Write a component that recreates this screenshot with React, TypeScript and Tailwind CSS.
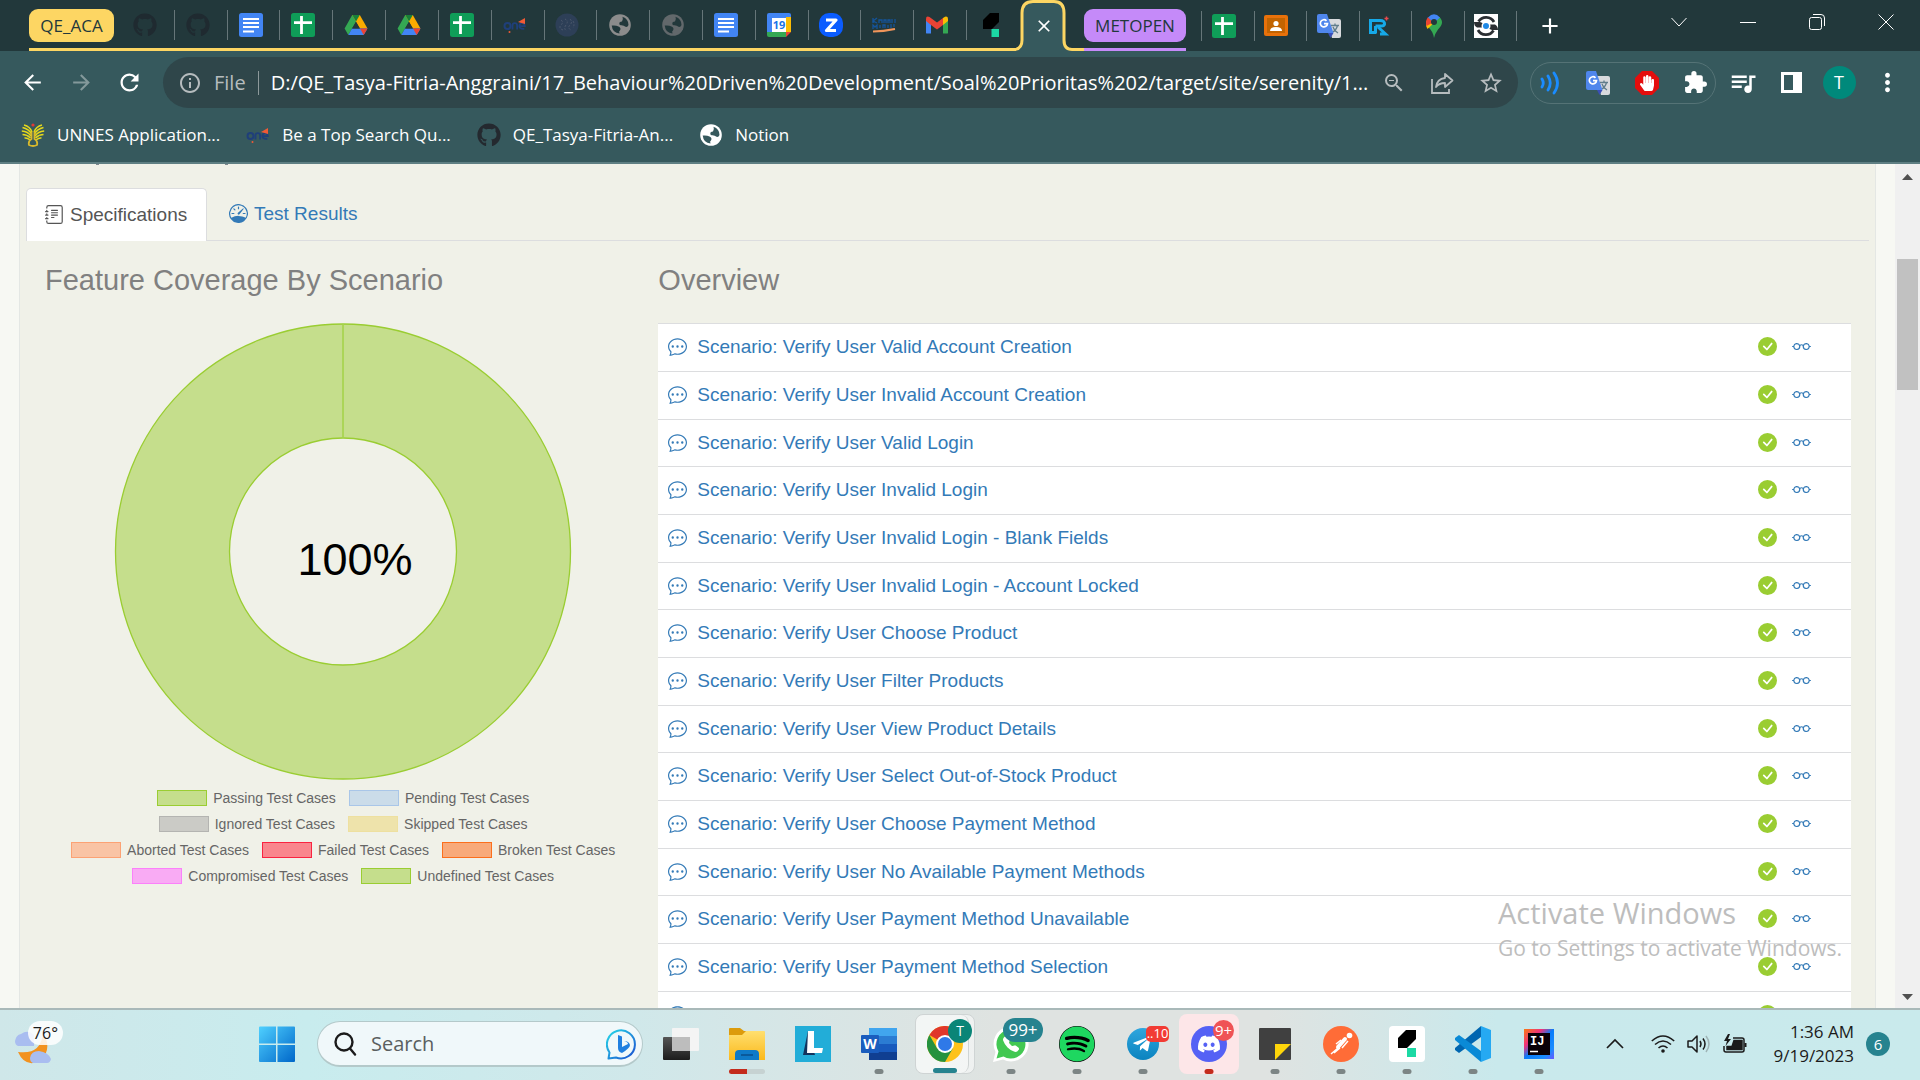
import React from "react";
import { FaGithub, FaHandPaper, FaSpotify, FaDiscord, FaTelegramPlane } from "react-icons/fa";
import {
  MdArrowBack, MdArrowForward, MdRefresh, MdInfoOutline, MdZoomOut, MdStarBorder, MdExtension,
  MdQueueMusic, MdMoreVert, MdAdd, MdClose,
} from "react-icons/md";
import { BsChatDots, BsCheckCircleFill, BsEyeglasses, BsJournalText, BsSpeedometer, BsTelephoneFill } from "react-icons/bs";

const DocsIcon = () => (
  <svg viewBox="0 0 24 24" className="size-6">
    <rect width="24" height="24" rx="2.5" fill="#4285f4" />
    <path d="M4 6h16M4 10h16M4 14h16M4 18.500h11" stroke="#fff" strokeWidth="2.200" />
  </svg>
);

const SheetsIcon = () => (
  <svg viewBox="0 0 24 24" className="size-6">
    <rect width="24" height="24" rx="2.5" fill="#0f9d58" />
    <path d="M3 9.700h18M10.500 3v18" stroke="#fff" strokeWidth="2.800" />
  </svg>
);

const DriveIcon = () => (
  <svg viewBox="0 0 24 22" className="size-6">
    <path d="M8.200 1h7.600L8 14.500 4.300 21 .6 14.500z" fill="#34a853" />
    <path d="M8.200 1h7.600l7.700 13.500h-7.600z" fill="#fbab00" />
    <path d="M8 14.500h15.500L19.700 21H4.300z" fill="#4285f4" />
    <path d="M16 14.500h7.500L19.700 21z" fill="#ea4335" />
    <path d="M8.200 1h7.600L12 7.600z" fill="#188038" />
    <path d="M12 8l3.900 6.500H8.100z" fill="#22383b" />
  </svg>
);

const GlobeIcon = ({ cls, hole }: { cls: string; hole: string }) => (
  <svg viewBox="0 0 24 24" className={"size-6 " + cls}>
    <circle cx="12" cy="12" r="10.800" fill="currentColor" />
    <path d="M14.500 3.800Q20.500 6 20.500 12 19.500 14.500 17.500 13.800 15.500 11.800 12.500 12.200 10.500 11.500 11.500 9.500 12.500 8.500 14 8.500 15.500 6.500 14.500 3.800zM3.700 12.500Q8 12 10.500 13.500 13.500 15 12 17.500 10.500 18 11.500 20.500 4.500 20 3.700 12.500z" fill={hole} />
  </svg>
);

const OneIcon = () => (
  <svg viewBox="0 0 24 24" className="size-6" fill="none">
    <circle cx="4.500" cy="13" r="3" stroke="#1f3f7a" strokeWidth="2" />
    <path d="M9.500 16.500V12.500q0-2.300 2.300-2.300t2.300 2.300v4M16.500 13.200h5.300q-.4-3-2.800-3t-2.700 3q.3 3 5 2.600" stroke="#1f3f7a" strokeWidth="1.800" />
    <path d="M15 9l7-4v6z" fill="#f15a35" />
    <circle cx="6.500" cy="19" r="1" fill="#f15a35" />
  </svg>
);

const SealIcon = () => (
  <svg viewBox="0 0 24 24" className="size-6">
    <circle cx="12" cy="12" r="11.500" fill="#2d3f57" />
    <path d="M6 7q3 2 0 5t2 5M10 6q4 2 1 6t1 6M15 6q3 3 0 6t1 5M18 8q2 3 0 7" fill="none" stroke="#4b586c" strokeDasharray="2 1.500" />
  </svg>
);

const CalendarIcon = () => (
  <svg viewBox="0 0 24 24" className="size-6">
    <path d="M0 2q0-2 2-2h20q2 0 2 2v3H0z" fill="#4285f4" />
    <path d="M0 4h5v15H0z" fill="#4285f4" />
    <path d="M19 4h5v15h-5z" fill="#fbbc04" />
    <path d="M0 19h19v5H2q-2 0-2-2z" fill="#34a853" />
    <path d="M19 19h5l-5 5z" fill="#ea4335" />
    <rect x="5" y="5" width="14" height="14" fill="#fff" />
    <text x="12" y="16" textAnchor="middle" fontSize="11" fontWeight="700" fontFamily="Open Sans" fill="#1a73e8">19</text>
  </svg>
);

const ZoomIcon = () => (
  <svg viewBox="0 0 24 24" className="size-6">
    <rect width="24" height="24" rx="10" fill="#0b5cff" />
    <path d="M7 7h10l-9.500 10.500H17" fill="none" stroke="#fff" strokeWidth="3.200" strokeLinejoin="round" />
  </svg>
);

const KampusIcon = () => (
  <svg viewBox="0 0 24 24" className="size-6" fill="none">
    <path d="M1 5v5M5 5l-4 3 4 2M7 10V7h3v3M12 10V7h2v3M16 10V7h2v3M20 10V6M23 10V6M1 16v-4l2 2 2-2v4M8 15v-3M11 15v-3h2v3M16 15v-3M19 15v-4M22 14v-3" stroke="#14549b" strokeWidth="1.300" />
    <path d="M1 18.500q10 0 22-2.500" stroke="#f0955a" strokeWidth="2" />
  </svg>
);

const GmailIcon = () => (
  <svg viewBox="0 0 24 24" className="size-6">
    <path d="M1 20V6l5 4v10.500H2.500Q1 20.500 1 20z" fill="#4285f4" />
    <path d="M23 20V6l-5 4v10.500h3.500q1.500 0 1.500-.5z" fill="#34a853" />
    <path d="M18 5l2-1.300Q23 3 23 6v2l-5 4z" fill="#fbbc04" />
    <path d="M1 8V6q0-3.500 3.500-2L12 9.500 18 5v7l-6 4.500L6 12V12z" fill="#ea4335" />
  </svg>
);

const TorreIcon = () => (
  <svg viewBox="0 0 24 24" className="size-6">
    <path d="M10 0h9v9l-7 7H3V7z" fill="#000" />
    <path d="M11.500 16H19v8h-7.500z" fill="#1bd9a4" />
  </svg>
);

const ClassroomIcon = () => (
  <svg viewBox="0 0 24 24" className="size-6">
    <rect y="1" width="24" height="21" rx="2" fill="#e8710a" />
    <rect x="3" y="4" width="18" height="15" fill="#c26401" />
    <circle cx="12" cy="9.500" r="2.600" fill="#fff" />
    <path d="M6 17q0-4 6-4t6 4z" fill="#fff" />
  </svg>
);

const TranslateIcon = () => (
  <svg viewBox="0 0 24 24" className="size-6">
    <path d="M9 5h13q2 0 2 2v15q0 2-2 2h-7z" fill="#d8dadd" />
    <path d="M14 11.500h8M18 9.500v2M20.500 11.500q-1 4.500-5.500 7M16 13q1 3.500 5 6" stroke="#607d8b" strokeWidth="1.300" fill="none" />
    <path d="M2 0h8l6.500 19H2q-2 0-2-2V2q0-2 2-2z" fill="#4f86ec" />
    <path d="M11 19h5.500L13.500 24z" fill="#3a4fb8" />
    <path d="M9.500 6.800A3.600 3.600 0 1 0 10.500 9.600H7" stroke="#fff" strokeWidth="1.700" fill="none" />
  </svg>
);

const RocketIcon = () => (
  <svg viewBox="0 0 24 24" className="size-6" fill="none">
    <path d="M1.500 5v13.500H7M6.500 12v7.500M6.500 12h6q3 0 3-2.500" stroke="#16a9e8" strokeWidth="3" />
    <path d="M1 6.500h10q5 0 4.500 4M9 13l7.500 7H11" stroke="#16a9e8" strokeWidth="3" />
    <path d="M17.500 2.500v4M15.500 4.500h4" stroke="#e5484d" strokeWidth="1.500" />
  </svg>
);

const MapsIcon = () => (
  <svg viewBox="0 0 24 24" className="size-6">
    <path d="M12 24Q11 17 5.500 12.500L17 3q3 2 3 5.500 0 3-4 7-3 4-4 8.500z" fill="#34a853" />
    <path d="M6 4.500L12 9l-6.500 6Q3.500 12 4 8z" fill="#fbbc04" />
    <path d="M6 3l6 5-7.500 4Q3 7 6 3z" fill="#ea4335" />
    <path d="M6 3.500Q12-3 18 3.500L12 9z" fill="#4285f4" />
    <circle cx="12" cy="8" r="3" fill="#22383b" />
  </svg>
);

const SyncIcon = () => (
  <svg viewBox="0 0 24 24" className="size-6">
    <rect width="24" height="24" fill="#fff" />
    <path d="M4.500 7.500A9 9 0 0 1 20 8M19.500 16.500A9 9 0 0 1 4 16" fill="none" stroke="#2b2f33" strokeWidth="2.800" />
    <path d="M0 8h6l5 2-3 3.500H3Q0 12 0 8zM24 16h-6l-5-2 3-3.500h5q3 1.500 3 5.500z" fill="#2b2f33" />
    <circle cx="12" cy="12" r="4.500" fill="#fff" />
    <circle cx="12" cy="12" r="3" fill="#1e88e5" />
  </svg>
);

const ShareIcon = () => (
  <svg viewBox="0 0 24 24" className="size-6" fill="none" stroke="currentColor" strokeWidth="1.800">
    <path d="M2 8v14h17v-4" />
    <path d="M15 3l7.500 6.500L15 16v-4q-6 0-9 4 1-8 9-9z" strokeLinejoin="round" />
  </svg>
);

const UnnesIcon = () => (
  <svg viewBox="0 0 24 24" className="size-6" fill="none" stroke="#e5d81c" strokeWidth="1.500">
    <path d="M11 9Q9 3.500 3 2M10.500 11Q8 6 1.500 4.500M10 13Q7 8.500 .8 8M9.500 15Q6 11.500 1.500 11.500M9 17Q6 14.500 3.500 15" />
    <path d="M13 9q2-5.500 8-7M13.500 11Q16 6 22.500 4.500M14 13q3-4.500 9.200-5M14.500 15q3.500-3.500 8-3.500M15 17q3-2.500 5.500-2" />
    <path d="M10.500 9V16Q7 18 8 22q4 2 8 0 1-4-2.500-6V9" stroke="#d9b92c" strokeWidth="1.800" />
    <circle cx="12" cy="2" r="1.600" fill="#e53935" stroke="none" />
  </svg>
);

type TabIcon = { name: string; icon: React.ReactNode };

const groupTabs: TabIcon[] = [
  { name: "GitHub", icon: <FaGithub className="size-6 text-[#1f2a30]" /> },
  { name: "GitHub 2", icon: <FaGithub className="size-6 text-[#1f2a30]" /> },
  { name: "Docs", icon: <DocsIcon /> },
  { name: "Sheets", icon: <SheetsIcon /> },
  { name: "Drive", icon: <DriveIcon /> },
  { name: "Drive 2", icon: <DriveIcon /> },
  { name: "Sheets 2", icon: <SheetsIcon /> },
  { name: "One", icon: <OneIcon /> },
  { name: "Seal", icon: <SealIcon /> },
  { name: "Web", icon: <GlobeIcon cls="text-[#8c8c8c]" hole="#22383b" /> },
  { name: "Web 2", icon: <GlobeIcon cls="text-[#62686b]" hole="#22383b" /> },
  { name: "Docs 2", icon: <DocsIcon /> },
  { name: "Calendar", icon: <CalendarIcon /> },
  { name: "Zoom", icon: <ZoomIcon /> },
  { name: "Kampus", icon: <KampusIcon /> },
  { name: "Gmail", icon: <GmailIcon /> },
];

const rightTabs: TabIcon[] = [
  { name: "Sheets 3", icon: <SheetsIcon /> },
  { name: "Classroom", icon: <ClassroomIcon /> },
  { name: "Translate", icon: <TranslateIcon /> },
  { name: "Rocket", icon: <RocketIcon /> },
  { name: "Maps", icon: <MapsIcon /> },
  { name: "Sync", icon: <SyncIcon /> },
];

function TabStrip() {
  return (
    <div className="flex h-[51px] bg-[#22383b] text-white">
      <div className="ml-[29px] flex min-w-0 flex-[987] border-b-[3px] border-[#fdd663]">
        <button className="mt-[9px] h-[33px] w-[85px] shrink-0 rounded-[9px] bg-[#fdd663] text-[17px] leading-[33px] text-[#22383b]">QE_ACA</button>
        <div className="ml-2 flex min-w-0 flex-1 items-center pt-0.5">
          {groupTabs.map((t) => (
            <button key={t.name} aria-label={t.name} className="flex h-[30px] min-w-0 flex-1 items-center justify-center border-r border-[#667679] pr-1.5">
              {t.icon}
            </button>
          ))}
          <button aria-label="Projects" className="flex w-[49px] items-center justify-center">
            <TorreIcon />
          </button>
        </div>
      </div>
      <button aria-label="Close tab" className="relative flex h-[51px] w-[68px] shrink-0 items-center justify-center">
        <svg viewBox="0 0 68 51" className="absolute inset-0 h-full w-full">
          <path d="M-1 51Q6 50 6 41V13Q6 1 17 1H38Q48 1 48 13V41Q48 50 56 51z" fill="#36595d" />
          <path d="M-2 49.500Q6 49 6 40V13Q6 1.500 17 1.500H38Q48 1.500 48 13V40Q48 49.500 56 49.500H68" fill="none" stroke="#fdd663" strokeWidth="3" />
        </svg>
        <MdClose className="relative mr-3 size-5" />
      </button>
      <div className="flex w-[102px] shrink-0 flex-col justify-between pt-[9px]">
        <button className="h-[33px] rounded-[9px] bg-[#c58af9] text-[17px] leading-[33px] text-[#22383b]">METOPEN</button>
        <div className="h-[3px] bg-[#c58af9]" />
      </div>
      <div className="ml-[15px] flex flex-[316] items-center">
        {rightTabs.map((t) => (
          <button
            key={t.name}
            aria-label={t.name}
            className="flex h-[30px] min-w-0 flex-1 items-center justify-center border-l border-[#667679] pr-2 last:border-r"
          >
            {t.icon}
          </button>
        ))}
      </div>
      <div className="flex flex-[358] items-center justify-between pr-[25px] pl-[20px]">
        <button aria-label="New tab"><MdAdd className="size-[26px]" /></button>
        <div className="flex gap-[51px] pb-2">
          <button aria-label="Search tabs"><svg viewBox="0 0 18 18" className="size-[18px]" fill="none" stroke="currentColor"><path d="M1.500 5l7.500 8 7.500-8" /></svg></button>
          <button aria-label="Minimize"><svg viewBox="0 0 18 18" className="size-[18px]" fill="none" stroke="currentColor"><path d="M1 9.500h16" /></svg></button>
          <button aria-label="Restore"><svg viewBox="0 0 18 18" className="size-[18px]" fill="none" stroke="currentColor"><rect x="1.500" y="4.500" width="12" height="12" rx="2" /><path d="M5 1.500h8q3.500 0 3.500 3.500v8" /></svg></button>
          <button aria-label="Close window"><svg viewBox="0 0 18 18" className="size-[18px]" fill="none" stroke="currentColor"><path d="M1.500 1.500l15 15M16.500 1.500l-15 15" /></svg></button>
        </div>
      </div>
    </div>
  );
}

function Toolbar() {
  return (
    <div className="flex h-[63px] items-center pr-[9px] pl-5 text-white">
      <button aria-label="Back"><MdArrowBack className="size-[25px]" /></button>
      <button aria-label="Forward" className="ml-6 text-[#84999b]"><MdArrowForward className="size-[25px]" /></button>
      <button aria-label="Reload" className="ml-[22px]"><MdRefresh className="size-[27px]" /></button>
      <div className="ml-5 flex h-[51px] min-w-0 flex-1 items-center rounded-full bg-[#2f464a] pr-[14px] pl-[15px] text-[#b6bcbe]">
        <MdInfoOutline className="size-6 shrink-0" />
        <label htmlFor="url" className="ml-3 text-xl">File</label>
        <div className="mx-3 h-6 w-px bg-[#8d999b]" />
        <input
          id="url"
          className="min-w-0 flex-1 bg-transparent text-xl text-white outline-none"
          defaultValue="D:/QE_Tasya-Fitria-Anggraini/17_Behaviour%20Driven%20Development/Soal%20Prioritas%202/target/site/serenity/1..."
        />
        <div className="ml-2 flex shrink-0 items-center gap-6">
          <button aria-label="Zoom"><MdZoomOut className="size-6" /></button>
          <button aria-label="Share"><ShareIcon /></button>
          <button aria-label="Bookmark"><MdStarBorder className="size-[26px]" /></button>
        </div>
      </div>
      <div className="ml-3 flex h-[42px] w-[186px] shrink-0 items-center justify-between rounded-full border border-[#557376] px-[7px]">
        <button aria-label="Audio">
          <svg viewBox="0 0 24 24" className="size-6" fill="none" stroke="#1a8cff" strokeWidth="2.800" strokeLinecap="round"><path d="M4 8q2.500 4 0 8M10 5q4.500 7 0 14M16 2q7 10 0 20" /></svg>
        </button>
        <button aria-label="Translate page"><TranslateIcon /></button>
        <button aria-label="Ad blocker" className="relative flex size-6 items-center justify-center">
          <svg viewBox="0 0 24 24" className="absolute inset-0"><path d="M7 0h10l7 7v10l-7 7H7l-7-7V7z" fill="#e40d0d" /></svg>
          <FaHandPaper className="relative size-4" />
        </button>
        <button aria-label="Extensions"><MdExtension className="size-[25px]" /></button>
      </div>
      <div className="ml-[3px] flex shrink-0 items-center">
        <button aria-label="Media" className="flex w-12 justify-center"><MdQueueMusic className="size-[30px]" /></button>
        <button aria-label="Side panel" className="flex w-12 justify-center"><span className="block size-[21px] border-3 border-r-[9px] border-white" /></button>
        <button aria-label="Profile" className="flex w-12 justify-center"><span className="size-[33px] rounded-full bg-[#00897b] text-lg leading-[33px]">T</span></button>
        <button aria-label="Menu" className="flex w-12 justify-center"><MdMoreVert className="size-[29px]" /></button>
      </div>
    </div>
  );
}

const bookmarks: { label: string; icon: React.ReactNode }[] = [
  { label: "UNNES Application...", icon: <UnnesIcon /> },
  { label: "Be a Top Search Qu...", icon: <OneIcon /> },
  { label: "QE_Tasya-Fitria-An...", icon: <FaGithub className="size-6 text-[#24292f]" /> },
  { label: "Notion", icon: <GlobeIcon cls="text-white" hole="#36595d" /> },
];

function Bookmarks() {
  return (
    <nav className="flex h-12 items-center gap-[26px] pb-1.5 pl-[21px] text-[17px] text-white">
      {bookmarks.map((b) => (
        <a key={b.label} href="#" className="flex items-center gap-3">
          {b.icon}
          <span>{b.label}</span>
        </a>
      ))}
    </nav>
  );
}

const legendRows: { label: string; cls: string }[][] = [
  [
    { label: "Passing Test Cases", cls: "border-[#9acd32] bg-[#c5de8c]" },
    { label: "Pending Test Cases", cls: "border-[#a9c6e8] bg-[#cbdce9]" },
  ],
  [
    { label: "Ignored Test Cases", cls: "border-[#b4b4b1] bg-[#cbcbc6]" },
    { label: "Skipped Test Cases", cls: "border-[#eee0a0] bg-[#eee3ab]" },
  ],
  [
    { label: "Aborted Test Cases", cls: "border-[#fca274] bg-[#f9c4a5]" },
    { label: "Failed Test Cases", cls: "border-[#fa2340] bg-[#f9868d]" },
    { label: "Broken Test Cases", cls: "border-[#fc6f1c] bg-[#f8aa7a]" },
  ],
  [
    { label: "Compromised Test Cases", cls: "border-[#fb80fa] bg-[#f9abf4]" },
    { label: "Undefined Test Cases", cls: "border-[#9acd32] bg-[#c5de8c]" },
  ],
];

const scenarios = [
  "Valid Account Creation",
  "Invalid Account Creation",
  "Valid Login",
  "Invalid Login",
  "Invalid Login - Blank Fields",
  "Invalid Login - Account Locked",
  "Choose Product",
  "Filter Products",
  "View Product Details",
  "Select Out-of-Stock Product",
  "Choose Payment Method",
  "No Available Payment Methods",
  "Payment Method Unavailable",
  "Payment Method Selection",
  "Payment Method Confirmation",
];

function Donut() {
  return (
    <svg viewBox="0 0 458 458" className="mx-auto block w-[458px]" role="img" aria-label="Feature coverage">
      <circle cx="229" cy="228.500" r="170.500" fill="none" stroke="#c5de8c" strokeWidth="114" />
      <circle cx="229" cy="228.500" r="227.500" fill="none" stroke="#9acd32" strokeWidth="1.300" />
      <circle cx="229" cy="228.500" r="113.500" fill="none" stroke="#9acd32" strokeWidth="1.300" />
      <path d="M229 1v114" stroke="#a5d34b" strokeWidth="1.600" />
      <text x="241" y="252" textAnchor="middle" fontSize="45" fontFamily="Liberation Sans" fill="#000">100%</text>
    </svg>
  );
}

function Report() {
  return (
    <main className="flex min-h-0 flex-1 overflow-hidden bg-[#f7f8f3] font-['Liberation_Sans',Arial,sans-serif] text-[19px] text-[#808080]">
      <div className="mx-[19px] min-w-0 flex-1 border-x border-[#e4e7e4] bg-[#f0f1e8] px-1.5">
        <div className="flex h-px gap-[126px] pl-[70px]">
          <span className="w-[3px] bg-[#808a90]" />
          <span className="w-[3px] bg-[#808a90]" />
        </div>
        <div role="tablist" className="mt-[23px] flex h-[53px] border-b border-[#dcdddf]">
          <button role="tab" aria-selected="true" className="-mb-px flex w-[181px] items-center rounded-t-[5px] border border-b-0 border-[#dcdddf] bg-white pl-[18px] text-[#555]">
            <BsJournalText className="mr-1.5 mb-0.5 size-[19px]" />
            Specifications
          </button>
          <button role="tab" aria-selected="false" className="ml-[22px] flex items-center text-[#337ab7]">
            <BsSpeedometer className="mr-1.5 mb-0.5 size-[19px]" />
            Test Results
          </button>
        </div>
        <div className="grid grid-cols-[1fr_2fr] gap-[17px] pr-[18px] pl-[19px]">
          <section>
            <h2 className="mt-[22px] mb-[26px] text-[29px] leading-[34px]">Feature Coverage By Scenario</h2>
            <Donut />
            <ul className="mt-1 text-sm text-[#666]">
              {legendRows.map((row) => (
                <li key={row[0].label} className="flex h-[26px] items-center justify-center gap-[13px]">
                  {row.map((e) => (
                    <span key={e.label} className="flex items-center gap-1.5 whitespace-nowrap">
                      <span className={"block h-4 w-[50px] border " + e.cls} />
                      {e.label}
                    </span>
                  ))}
                </li>
              ))}
            </ul>
          </section>
          <section className="min-w-0">
            <h2 className="mt-[22px] mb-[26px] text-[29px] leading-[34px]">Overview</h2>
            <table className="w-full bg-white text-[#337ab7]">
              <tbody>
                {scenarios.map((s) => (
                  <tr key={s} className="h-12 border-t border-[#dcdddf] nth-[3n]:h-[47px]">
                    <td className="pl-2.5">
                      <a href="#" className="flex items-center gap-2.5">
                        <BsChatDots className="mb-0.5 size-[19px]" />
                        Scenario: Verify User {s}
                      </a>
                    </td>
                    <td className="w-11 pb-0.5 text-[#9acd32]"><BsCheckCircleFill className="size-[19px]" title="Passed" /></td>
                    <td className="w-[49px] pb-0.5"><a href="#" aria-label="Details"><BsEyeglasses className="-ml-2.5 size-[19px]" /></a></td>
                  </tr>
                ))}
              </tbody>
            </table>
          </section>
        </div>
      </div>
      <div className="flex w-[25px] shrink-0 flex-col items-center bg-[#f0f0f0] pt-2.5 pb-2 text-[#505050]">
        <svg viewBox="0 0 11 6" className="h-[6px] w-[11px]" fill="currentColor"><path d="M0 6l5.500-6L11 6z" /></svg>
        <div className="mt-[79px] h-[131px] w-[21px] bg-[#c1c1c1]" />
        <svg viewBox="0 0 11 6" className="mt-auto h-[6px] w-[11px]" fill="currentColor"><path d="M0 0l5.500 6L11 0z" /></svg>
      </div>
    </main>
  );
}

const Badge = ({ text, cls }: { text: string; cls: string }) => (
  <span className={"absolute flex items-center justify-center text-white " + cls}>{text}</span>
);

const apps: { name: string; icon: React.ReactNode; cell?: string; bar?: string }[] = [
  {
    name: "Task view",
    icon: (
      <svg viewBox="0 0 36 36" className="size-9">
        <defs><linearGradient id="tv" x2="0" y2="1"><stop stopColor="#555" /><stop offset="1" stopColor="#1c1c1c" /></linearGradient></defs>
        <rect x="0" y="11" width="27" height="23" rx="1" fill="url(#tv)" />
        <rect x="9" y="2" width="27" height="23" rx="1" fill="#f4f4f4" />
        <path d="M9 11h18v14H9z" fill="#bdbdbd" />
      </svg>
    ),
  },
  {
    name: "File Explorer",
    bar: "w-9 bg-[linear-gradient(90deg,#c42b1c_50%,#c6d2d2_50%)]",
    icon: (
      <svg viewBox="0 0 36 36" className="size-9">
        <defs><linearGradient id="fe" x2="0" y2="1"><stop stopColor="#ffdf6f" /><stop offset="1" stopColor="#fbb91c" /></linearGradient></defs>
        <path d="M0 3q0-1 1-1h10l4 3h20v8H0z" fill="#dc9b0c" />
        <path d="M0 9h13l4-4h18q1 0 1 1v28H0z" fill="url(#fe)" />
        <path d="M6 34V28q0-4 4-4h16q4 0 4 4v6z" fill="#0f7ac8" />
        <path d="M12 29h12" stroke="#0a4f8c" strokeWidth="1.500" />
      </svg>
    ),
  },
  {
    name: "L",
    icon: (
      <svg viewBox="0 0 36 36" className="size-9">
        <rect width="36" height="36" fill="#22add8" />
        <path d="M13 5l-5 24 12 0z" fill="#12345e" />
        <path d="M13 5h6v17h9l-1 5H12z" fill="#fff" />
      </svg>
    ),
  },
  {
    name: "Word",
    bar: "w-[9px] bg-[#7c8585]",
    icon: (
      <svg viewBox="0 0 36 36" className="size-9">
        <path d="M8 2h28v8H8z" fill="#41a5ee" />
        <path d="M8 10h28v8H8z" fill="#2b7cd3" />
        <path d="M8 18h28v8H8z" fill="#185abd" />
        <path d="M8 26h28v8H8z" fill="#103f91" />
        <rect x="0" y="9" width="18" height="18" rx="1" fill="#1a5dbe" />
        <text x="9" y="23" textAnchor="middle" fontSize="14" fontWeight="700" fontFamily="Open Sans" fill="#fff">W</text>
      </svg>
    ),
  },
  {
    name: "Chrome",
    cell: "bg-white/50 border border-[#cfd4d4]",
    bar: "w-6 bg-[#26838f]",
    icon: (
      <>
        <span className="absolute inset-y-0 left-0 w-[53px] rounded-lg border-r border-[#cfd4d4] bg-white/30" />
        <svg viewBox="0 0 36 36" className="relative size-9">
          <circle cx="18" cy="18" r="18" fill="#fdc21b" />
          <path d="M18 18L2.400 9A18 18 0 0 1 33.600 9z" fill="#e0372b" />
          <path d="M2.400 9A18 18 0 0 0 18 36L25.800 22.500 10.200 22.500z" fill="#25923f" />
          <circle cx="18" cy="18" r="9" fill="#fff" />
          <circle cx="18" cy="18" r="7" fill="#2f79e8" />
        </svg>
        <Badge text="T" cls="top-1 right-0.5 size-6 rounded-full bg-[#0a8577] text-sm" />
      </>
    ),
  },
  {
    name: "WhatsApp",
    bar: "w-[9px] bg-[#7c8585]",
    icon: (
      <>
        <span className="relative flex size-9 items-center justify-center">
          <svg viewBox="0 0 36 36" className="absolute inset-0">
            <path d="M0 36L2.500 26A17.500 17.500 0 1 1 10 33.500z" fill="#fff" />
            <path d="M3.500 32.500L5.500 25.500A14.500 14.500 0 1 1 10.500 30.500z" fill="#42c852" />
          </svg>
          <BsTelephoneFill className="relative size-4 text-white" />
        </span>
        <Badge text="99+" cls="top-1 -right-0.5 h-6 w-10 rounded-xl bg-[#26838f] text-[17px]" />
      </>
    ),
  },
  { name: "Spotify", bar: "w-[9px] bg-[#7c8585]", icon: <FaSpotify className="size-9 rounded-full bg-black text-[#1ed760]" /> },
  {
    name: "Telegram",
    bar: "w-[9px] bg-[#7c8585]",
    icon: (
      <>
        <span className="flex size-8 items-center justify-center rounded-full bg-[linear-gradient(#2fa6de,#0b83bf)]">
          <FaTelegramPlane className="mr-0.5 size-5 text-white" />
        </span>
        <Badge text="..10" cls="top-3 right-1 h-4 w-[23px] rounded-[5px] bg-[#f23c34] text-[13px]" />
      </>
    ),
  },
  {
    name: "Discord",
    cell: "bg-[#fde6e8]",
    bar: "w-[9px] bg-[#c42b1c]",
    icon: (
      <>
        <span className="flex size-9 items-center justify-center rounded-full bg-[#5561f5]">
          <FaDiscord className="size-6 text-white" />
        </span>
        <Badge text="9+" cls="top-1.5 right-[5px] size-[21px] rounded-full bg-[#ef5356] text-[15px]" />
      </>
    ),
  },
  {
    name: "Sticky notes",
    bar: "w-[9px] bg-[#7c8585]",
    icon: (
      <svg viewBox="0 0 32 32" className="size-8">
        <rect width="32" height="32" rx="1" fill="#404040" />
        <path d="M16 16h16L16 32z" fill="#ffd60a" />
      </svg>
    ),
  },
  {
    name: "Postman",
    bar: "w-[9px] bg-[#7c8585]",
    icon: (
      <svg viewBox="0 0 36 36" className="size-9" fill="none">
        <circle cx="18" cy="18" r="18" fill="#ff6c37" />
        <circle cx="26.500" cy="9.500" r="2.800" fill="#fff" />
        <path d="M22 13L15 21" stroke="#fff" strokeWidth="4" strokeLinecap="round" />
        <path d="M25 15l-6 7M15 22l-7 6M17 22l-6 5M18 14l-5 4" stroke="#fff" strokeWidth="1.500" />
      </svg>
    ),
  },
  {
    name: "Projects app",
    bar: "w-[9px] bg-[#7c8585]",
    icon: (
      <svg viewBox="0 0 36 36" className="size-9">
        <rect width="36" height="36" rx="4" fill="#fff" />
        <path d="M17 4h10v9l-9 9H9V12z" fill="#000" />
        <path d="M18 22h9v9h-9z" fill="#1bd9a4" />
      </svg>
    ),
  },
  {
    name: "VS Code",
    bar: "w-[9px] bg-[#7c8585]",
    icon: (
      <svg viewBox="0 0 36 36" className="size-9">
        <path d="M26 0v11L4 27 0 24q-.6-1 0-2z" fill="#0066b0" />
        <path d="M26 36V25L4 9 0 12q-.6 1 0 2z" fill="#0a8ad6" />
        <path d="M26 0l10 4v28l-10 4z" fill="#25a9f2" />
      </svg>
    ),
  },
  {
    name: "IntelliJ",
    bar: "w-[9px] bg-[#7c8585]",
    icon: (
      <svg viewBox="0 0 30 30" className="size-[30px]">
        <defs><linearGradient id="ij" x2="1" y2="1"><stop stopColor="#f97a12" /><stop offset=".3" stopColor="#f0307a" /><stop offset=".5" stopColor="#087cfa" /><stop offset=".8" stopColor="#1a8cff" /><stop offset="1" stopColor="#6b57ff" /></linearGradient></defs>
        <rect width="30" height="30" fill="url(#ij)" />
        <rect x="4" y="4" width="22" height="22" fill="#0a0008" />
        <text x="6" y="16" fontSize="12" fontWeight="700" fontFamily="Liberation Mono" fill="#fff">IJ</text>
        <path d="M6 22.500h8" stroke="#fff" strokeWidth="1.500" />
      </svg>
    ),
  },
];

function Taskbar() {
  return (
    <footer className="flex h-[72px] shrink-0 items-center border-t-2 border-[#a9b9b9] bg-[linear-gradient(90deg,#cfe7e9_0%,#c8ecee_16%,#d0e8ea_33%,#dfe3e1_52%,#dfe3e1_66%,#c9e9ec_78%,#c9eaec_100%)] pb-0.5 text-[#1b1b1b]">
      <div className="flex flex-1 justify-between">
        <button aria-label="Weather" className="relative ml-[15px] h-[46px] w-12">
          <svg viewBox="0 0 48 46" className="h-[46px] w-12">
            <path d="M3 31Q26 34 28 12q10 16-3 28-15 7-22-9z" fill="#f2921f" />
            <path d="M0 20q1-6 6-7 7-5 13 1v11H3q-3-1-3-5zM15 37q1-7 9-7 9 1 12 8-1 4-4 4H18q-3-1-3-5z" fill="#a9bdf0" />
          </svg>
          <span className="absolute top-0 right-0 rounded-full bg-white/85 px-[5px] text-base">76°</span>
        </button>
        <div className="flex items-center gap-[22px]">
          <button aria-label="Start">
            <svg viewBox="0 0 36 36" className="size-9">
              <defs><linearGradient id="win" x2="1" y2="1"><stop stopColor="#4fd0ff" /><stop offset="1" stopColor="#0067c9" /></linearGradient></defs>
              <path d="M0 1.500q0-1 1-1h16v17H0zM18.500.500H35q1 0 1 1v16H18.500zM0 19h17v17H1q-1 0-1-1zM18.500 19H36v16q0 1-1 1H18.500z" fill="url(#win)" />
            </svg>
          </button>
          <label className="flex h-[46px] w-[326px] items-center rounded-full border border-b-2 border-[#b4c9ca] bg-[#f0f8fa] pr-1 pl-[15px]">
            <svg viewBox="0 0 24 24" className="size-6" fill="none" stroke="currentColor" strokeWidth="2.400"><circle cx="11" cy="10" r="8.500" /><path d="M17 16.500l5 6" strokeLinecap="round" /></svg>
            <input aria-label="Search" placeholder="Search" className="ml-3.5 min-w-0 flex-1 bg-transparent text-xl outline-none placeholder:text-[#5a5f60]" />
            <svg viewBox="0 0 32 32" className="size-8" fill="none">
              <defs><linearGradient id="bing" x2="1" y2="1"><stop stopColor="#26d9e8" /><stop offset="1" stopColor="#1b4fd0" /></linearGradient></defs>
              <path d="M2.500 30.500L3.500 24.500A14 14 0 1 1 10 29.500z" stroke="url(#bing)" strokeWidth="2" strokeLinejoin="round" />
              <path d="M12 7l4 1.500V19l6-3q0-2-4-3 5 0 6 4 0 3-8 8-4-1-4-5z" fill="#1f7fe0" />
            </svg>
          </label>
        </div>
      </div>
      <div className="ml-[5px] flex shrink-0">
        {apps.map((a) => (
          <button key={a.name} aria-label={a.name} className="flex h-[68px] w-[66px] items-center justify-center">
            <span className={"relative flex h-[60px] w-[60px] items-center justify-center rounded-lg " + (a.cell ?? "")}>
              {a.icon}
              {a.bar && <span className={"absolute bottom-0 left-1/2 h-[5px] -translate-x-1/2 rounded-full " + a.bar} />}
            </span>
          </button>
        ))}
      </div>
      <div className="ml-[34px] flex shrink-0 items-center pr-[30px]">
        <svg viewBox="0 0 18 18" className="size-[18px]" fill="none" stroke="currentColor" strokeWidth="1.700"><path d="M1 13l8-8 8 8" /></svg>
        <svg viewBox="0 0 24 18" className="ml-[27px] h-[18px] w-6" fill="none" stroke="currentColor" strokeWidth="1.600"><path d="M.8 6q11.200-10 22.400 0M4 9.500q8-7 16 0M7.500 13q4.500-4 9 0" /><circle cx="12" cy="16" r="1.800" fill="currentColor" stroke="none" /></svg>
        <svg viewBox="0 0 24 20" className="ml-3 h-5 w-6" fill="none" stroke="currentColor" strokeWidth="1.500"><path d="M1 7v6h4l5 5V2L5 7z" strokeLinejoin="round" /><path d="M13 7q2 3 0 6M16 4.500q4 5.500 0 11" /><path d="M19 2q6 8 0 16" stroke="#9fb4b6" /></svg>
        <svg viewBox="0 0 24 20" className="ml-3 h-5 w-6" fill="none" stroke="currentColor" strokeWidth="1.500"><path d="M10 4h9q2 0 2 2v10q0 2-2 2H3q-2 0-2-2v-4" /><path d="M11 6.500h8v9H4v-3h5z" fill="currentColor" /><path d="M22.500 9v4" strokeWidth="2" /><path d="M5 0L1 7h3L2.500 12 8 5H5l2-5z" fill="currentColor" stroke="none" /></svg>
        <div className="ml-[23px] w-[84px] text-right text-[17px] leading-6 whitespace-nowrap">
          <div>1:36 AM</div>
          <div>9/19/2023</div>
        </div>
        <button className="ml-3 size-6 rounded-full bg-[#26838f] text-[15px] leading-6 text-white">6</button>
      </div>
    </footer>
  );
}

export default function App() {
  return (
    <div className="relative flex h-screen flex-col overflow-hidden bg-[#f7f8f3] font-['Open_Sans','Noto_Sans',sans-serif]">
      <header className="shrink-0 border-b-2 border-[#5f7f83] bg-[#36595d]">
        <TabStrip />
        <Toolbar />
        <Bookmarks />
      </header>
      <Report />
      <Taskbar />
      <aside className="pointer-events-none absolute right-[79px] bottom-[115px] w-[343px] whitespace-nowrap text-[#bdbdbd]">
        <p className="text-[29px] leading-9">Activate Windows</p>
        <p className="text-[21px] leading-[34px]">Go to Settings to activate Windows.</p>
      </aside>
    </div>
  );
}
